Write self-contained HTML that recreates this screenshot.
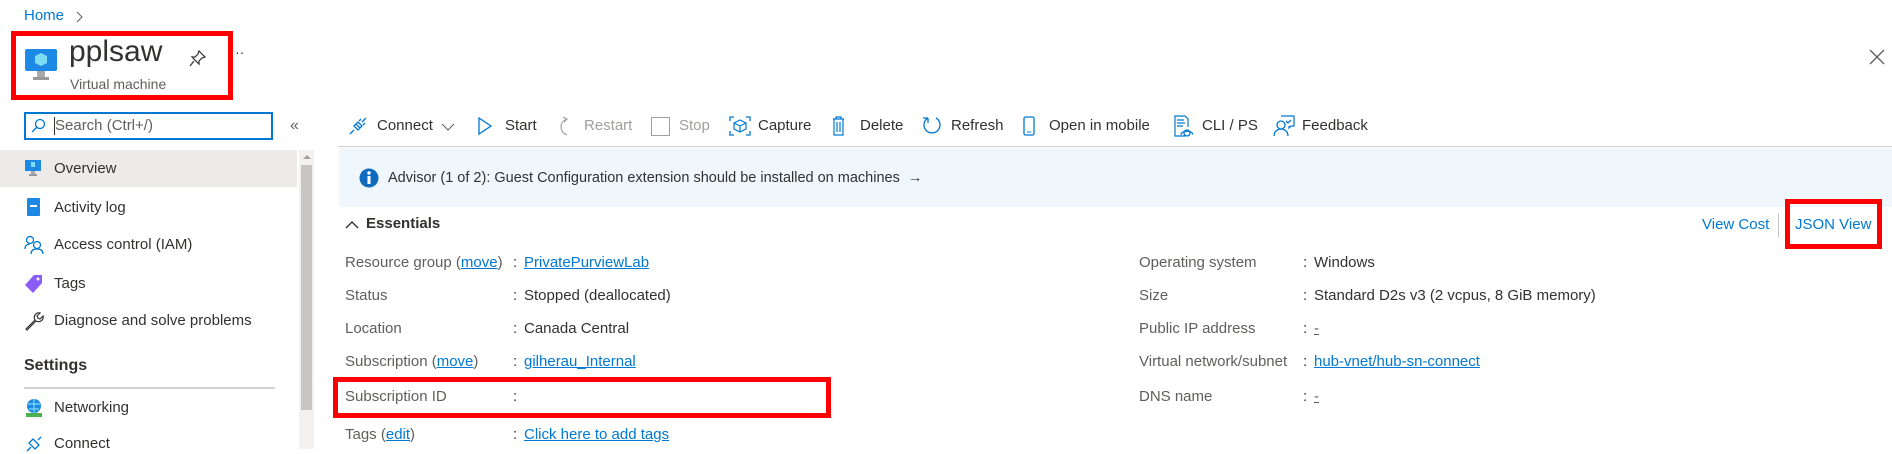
<!DOCTYPE html>
<html><head><meta charset="utf-8"><style>
*{margin:0;padding:0;box-sizing:border-box}
body{width:1892px;height:449px;overflow:hidden;background:#fff;font-family:"Liberation Sans",sans-serif;color:#323130;position:relative;font-size:14px}
.a{position:absolute;white-space:nowrap}
.lnk{color:#0078d4}
.u{text-decoration:underline}
.lbl{color:#605e5c}
.dis{color:#a19f9d}
svg{position:absolute}
</style></head><body>
<div class="a lnk" style="left:24px;top:7px;font-size:15px">Home</div>
<svg style="left:76px;top:11px" width="8" height="12"><path d="M1 1l5 5-5 5" stroke="#605e5c" fill="none"/></svg>

<div class="a" style="left:11px;top:31px;width:222px;height:69px;border:5px solid #f00"></div>
<svg style="left:24px;top:48px" width="34" height="34" viewBox="0 0 34 34"><rect x="1" y="1" width="32" height="22" rx="2" fill="#1e88e5"/><path d="M17 5l6 3v7l-6 3-6-3V8z" fill="#7fdcf5"/><rect x="13" y="23" width="8" height="6" fill="#aaa"/><rect x="9" y="29" width="16" height="3" fill="#999"/></svg>
<div class="a" style="left:69px;top:35px;font-size:30px;color:#323130">pplsaw</div>
<div class="a" style="left:70px;top:76px;font-size:14px;color:#605e5c">Virtual machine</div>
<svg style="left:189px;top:49px" width="18" height="18" viewBox="0 0 18 18"><path d="M10 2l6 6-3 1-3 3 0 3-7-7 3 0 3-3z M5 12l-4 5" stroke="#323130" fill="none" stroke-width="1.2"/></svg>
<div class="a" style="left:235px;top:44px;font-size:14px">··</div>
<svg style="left:1869px;top:49px" width="16" height="16"><path d="M1 1l14 14M15 1L1 15" stroke="#605e5c" stroke-width="1.3"/></svg>

<div class="a" style="left:24px;top:112px;width:249px;height:28px;border:2px solid #0078d4"></div>
<svg style="left:30px;top:118px" width="16" height="16"><circle cx="10" cy="6" r="4.5" stroke="#0078d4" fill="none" stroke-width="1.3"/><path d="M7 9l-5 5" stroke="#0078d4" stroke-width="1.3"/></svg>
<div class="a" style="left:54px;top:117px;width:1px;height:18px;background:#323130"></div>
<div class="a" style="left:55px;top:117px;font-size:15px;color:#605e5c">Search (Ctrl+/)</div>
<div class="a" style="left:290px;top:117px;font-size:16px;color:#605e5c">«</div>

<div class="a" style="left:0;top:150px;width:297px;height:37px;background:#edebe9"></div>
<div class="a" style="left:299px;top:150px;width:15px;height:299px;background:#f3f2f1"></div>
<div class="a" style="left:301px;top:165px;width:11px;height:245px;background:#c8c6c4"></div>
<svg style="left:302px;top:153px" width="10" height="8"><path d="M1 6l4-4 4 4z" fill="#a19f9d"/></svg>

<svg style="left:24px;top:159px" width="18" height="18"><rect x="1" y="1" width="16" height="11" fill="#1e88e5"/><rect x="7" y="3" width="4" height="5" fill="#7fdcf5"/><rect x="7" y="12" width="4" height="3" fill="#aaa"/><rect x="5" y="15" width="8" height="2" fill="#999"/></svg>
<div class="a" style="left:54px;top:160px;font-size:15px">Overview</div>
<svg style="left:26px;top:197px" width="16" height="20"><rect x="1" y="1" width="13" height="18" rx="1" fill="#1e88e5"/><rect x="4" y="8" width="7" height="2" fill="#fff"/></svg>
<div class="a" style="left:54px;top:199px;font-size:15px">Activity log</div>
<svg style="left:24px;top:235px" width="20" height="20"><circle cx="6" cy="5" r="3.5" stroke="#0078d4" fill="none" stroke-width="1.3"/><path d="M1 14c0-4 3-5 5-5" stroke="#0078d4" fill="none" stroke-width="1.3"/><circle cx="13" cy="10" r="3.5" stroke="#0078d4" fill="none" stroke-width="1.3"/><path d="M7 19c0-4 3-5 6-5s6 1 6 5" stroke="#0078d4" fill="none" stroke-width="1.3"/></svg>
<div class="a" style="left:54px;top:236px;font-size:15px">Access control (IAM)</div>
<svg style="left:24px;top:274px" width="20" height="20"><path d="M10 1h8v8l-9 10-8-8z" fill="#8b5cf6"/><circle cx="14" cy="5" r="1.5" fill="#fff"/></svg>
<div class="a" style="left:54px;top:275px;font-size:15px">Tags</div>
<svg style="left:24px;top:311px" width="20" height="20"><path d="M2 18l9-9c-2-4 1-8 5-7l-3 3 1 2 2 1 3-3c1 4-3 7-7 5l-9 9z" stroke="#323130" fill="none" stroke-width="1.2"/></svg>
<div class="a" style="left:54px;top:312px;font-size:15px">Diagnose and solve problems</div>
<div class="a" style="left:24px;top:357px;font-size:16px;font-weight:bold;color:#323130;font-weight:600">Settings</div>
<div class="a" style="left:24px;top:387px;width:251px;height:2px;background:#d2d0ce"></div>
<svg style="left:24px;top:398px" width="20" height="20"><circle cx="10" cy="8" r="7" fill="#1e88e5"/><path d="M4 6h12M5 11h10M10 1v14" stroke="#7fdcf5" stroke-width="1.2"/><rect x="2" y="15" width="16" height="4" fill="#4caf50"/></svg>
<div class="a" style="left:54px;top:399px;font-size:15px">Networking</div>
<svg style="left:24px;top:434px" width="20" height="20"><path d="M3 17l4-4M9 5l6 6-4 4-6-6zM17 3l-3 3" stroke="#0078d4" fill="none" stroke-width="1.3"/></svg>
<div class="a" style="left:54px;top:435px;font-size:15px">Connect</div>

<!-- toolbar -->
<svg style="left:349px;top:117px" width="18" height="18"><path d="M1 17l4-4M7 7l4 4M5 9l4-4 4 4-4 4zM17 1l-4 4M10 4l2-2M14 8l2-2" stroke="#0078d4" fill="none" stroke-width="1.3"/></svg>
<div class="a" style="left:377px;top:117px;font-size:15px">Connect</div>
<svg style="left:441px;top:123px" width="14" height="8"><path d="M1 1l6 6 6-6" stroke="#605e5c" fill="none"/></svg>
<svg style="left:478px;top:117px" width="14" height="18"><path d="M1 1l12 8-12 8z" stroke="#0078d4" fill="none" stroke-width="1.3"/></svg>
<div class="a" style="left:505px;top:117px;font-size:15px">Start</div>
<svg style="left:557px;top:116px" width="16" height="20"><path d="M10 19c-8-3-8-13 0-16M6 1l4 2-3 3" stroke="#a19f9d" fill="none" stroke-width="1.2"/></svg>
<div class="a dis" style="left:584px;top:117px;font-size:15px">Restart</div>
<div class="a" style="left:651px;top:117px;width:19px;height:19px;border:1.5px solid #a19f9d"></div>
<div class="a dis" style="left:679px;top:117px;font-size:15px">Stop</div>
<svg style="left:729px;top:116px" width="22" height="20"><path d="M1 5V1h4M17 1h4v4M21 15v4h-4M5 19H1v-4" stroke="#0078d4" fill="none" stroke-width="1.3"/><path d="M11 4l6 3v6l-6 3-6-3V7z M5 7l6 3 6-3M11 10v6" stroke="#0078d4" fill="none" stroke-width="1.2"/></svg>
<div class="a" style="left:758px;top:117px;font-size:15px">Capture</div>
<svg style="left:832px;top:116px" width="13" height="20"><path d="M1 3h11M4 3V1h5v2M2 3v16h9V3M5 6v10M8 6v10" stroke="#0078d4" fill="none" stroke-width="1.2"/></svg>
<div class="a" style="left:860px;top:117px;font-size:15px">Delete</div>
<svg style="left:922px;top:115px" width="20" height="22"><path d="M6 3a8 8 0 1 0 8 0M6 3V8M6 3H1" stroke="#0078d4" fill="none" stroke-width="1.3"/></svg>
<div class="a" style="left:951px;top:117px;font-size:15px">Refresh</div>
<svg style="left:1023px;top:116px" width="12" height="20"><rect x="1" y="1" width="10" height="18" rx="1.5" stroke="#0078d4" fill="none" stroke-width="1.3"/><path d="M4 16h4" stroke="#0078d4"/></svg>
<div class="a" style="left:1049px;top:117px;font-size:15px">Open in mobile</div>
<svg style="left:1173px;top:115px" width="20" height="22"><path d="M12 21H2V1h10l3 3v8M4 5h7M4 8h8M4 11h6" stroke="#0078d4" fill="none" stroke-width="1.2"/><circle cx="14" cy="18" r="3" stroke="#0078d4" fill="none" stroke-width="1.3"/><path d="M8 20c0-5 12-5 12 0" stroke="#0078d4" fill="none" stroke-width="1.2"/></svg>
<div class="a" style="left:1202px;top:117px;font-size:15px">CLI / PS</div>
<svg style="left:1273px;top:115px" width="22" height="22"><path d="M8 1h13v10h-3l-2 2v-2" stroke="#0078d4" fill="none" stroke-width="1.2"/><circle cx="8" cy="10" r="4" stroke="#0078d4" fill="none" stroke-width="1.3"/><path d="M1 21c0-5 4-7 7-7s7 2 7 7M13 6l2 2 3-3" stroke="#0078d4" fill="none" stroke-width="1.3"/></svg>
<div class="a" style="left:1302px;top:117px;font-size:15px">Feedback</div>

<div class="a" style="left:338px;top:146px;width:1554px;height:1px;background:#d2d0ce"></div>
<div class="a" style="left:339px;top:148px;width:1553px;height:59px;background:#eff6fc"></div>
<svg style="left:359px;top:168px" width="20" height="20"><circle cx="10" cy="10" r="9.5" fill="#0f6cbd"/><rect x="8.5" y="8" width="3" height="8" fill="#fff"/><circle cx="10" cy="5" r="1.7" fill="#fff"/></svg>
<div class="a" style="left:388px;top:170px;font-size:14.5px">Advisor (1 of 2): Guest Configuration extension should be installed on machines&nbsp; →</div>

<svg style="left:345px;top:220px" width="14" height="9"><path d="M1 8l6-6 6 6" stroke="#323130" fill="none" stroke-width="1.4"/></svg>
<div class="a" style="left:366px;top:215px;font-size:15px;font-weight:600">Essentials</div>
<div class="a lnk" style="left:1702px;top:216px;font-size:15px">View Cost</div>
<div class="a" style="left:1778px;top:213px;width:1px;height:24px;background:#c8c6c4"></div>
<div class="a lnk" style="left:1795px;top:216px;font-size:15px">JSON View</div>
<div class="a" style="left:1785px;top:199px;width:97px;height:50px;border:5px solid #f00"></div>

<div class="a lbl" style="left:345px;top:254px;font-size:15px">Resource group (<span class="lnk u">move</span>)</div>
<div class="a" style="left:513px;top:254px;font-size:15px">:</div>
<div class="a lnk u" style="left:524px;top:254px;font-size:15px">PrivatePurviewLab</div>
<div class="a lbl" style="left:345px;top:287px;font-size:15px">Status</div>
<div class="a" style="left:513px;top:287px;font-size:15px">:</div>
<div class="a" style="left:524px;top:287px;font-size:15px">Stopped (deallocated)</div>
<div class="a lbl" style="left:345px;top:320px;font-size:15px">Location</div>
<div class="a" style="left:513px;top:320px;font-size:15px">:</div>
<div class="a" style="left:524px;top:320px;font-size:15px">Canada Central</div>
<div class="a lbl" style="left:345px;top:353px;font-size:15px">Subscription (<span class="lnk u">move</span>)</div>
<div class="a" style="left:513px;top:353px;font-size:15px">:</div>
<div class="a lnk u" style="left:524px;top:353px;font-size:15px">gilherau_Internal</div>
<div class="a" style="left:333px;top:377px;width:498px;height:41px;border:5px solid #f00"></div>
<div class="a lbl" style="left:345px;top:388px;font-size:15px">Subscription ID</div>
<div class="a" style="left:513px;top:388px;font-size:15px">:</div>
<div class="a lbl" style="left:345px;top:426px;font-size:15px">Tags (<span class="lnk u">edit</span>)</div>
<div class="a" style="left:513px;top:426px;font-size:15px">:</div>
<div class="a lnk u" style="left:524px;top:426px;font-size:15px">Click here to add tags</div>

<div class="a lbl" style="left:1139px;top:254px;font-size:15px">Operating system</div>
<div class="a" style="left:1303px;top:254px;font-size:15px">:</div>
<div class="a" style="left:1314px;top:254px;font-size:15px">Windows</div>
<div class="a lbl" style="left:1139px;top:287px;font-size:15px">Size</div>
<div class="a" style="left:1303px;top:287px;font-size:15px">:</div>
<div class="a" style="left:1314px;top:287px;font-size:15px">Standard D2s v3 (2 vcpus, 8 GiB memory)</div>
<div class="a lbl" style="left:1139px;top:320px;font-size:15px">Public IP address</div>
<div class="a" style="left:1303px;top:320px;font-size:15px">:</div>
<div class="a lnk u lbl" style="left:1314px;top:320px;font-size:15px;color:#605e5c">-</div>
<div class="a lbl" style="left:1139px;top:353px;font-size:15px">Virtual network/subnet</div>
<div class="a" style="left:1303px;top:353px;font-size:15px">:</div>
<div class="a lnk u" style="left:1314px;top:353px;font-size:15px">hub-vnet/hub-sn-connect</div>
<div class="a lbl" style="left:1139px;top:388px;font-size:15px">DNS name</div>
<div class="a" style="left:1303px;top:388px;font-size:15px">:</div>
<div class="a u" style="left:1314px;top:388px;font-size:15px;color:#605e5c">-</div>
</body></html>
